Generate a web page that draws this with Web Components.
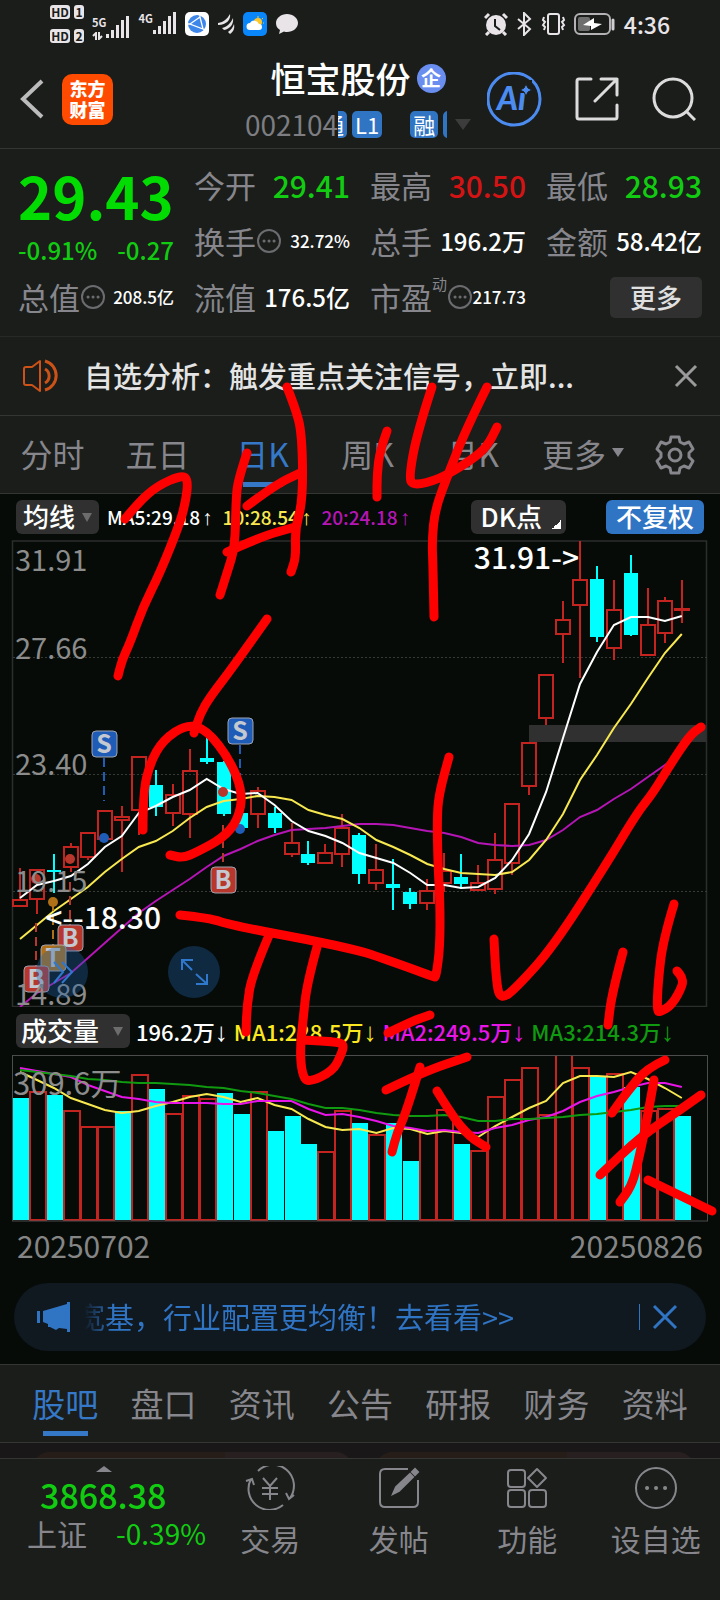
<!DOCTYPE html>
<html lang="zh-CN">
<head>
<meta charset="utf-8">
<meta name="viewport" content="width=device-width, initial-scale=1">
<title>恒宝股份 002104</title>
<style>
  body {
    margin: 0;
    background: #1a1d1a;
  }
</style>
</head>
<body>
<stock-app></stock-app>

<script>
/**
 * Registers a custom element that renders fixed markup in its shadow root.
 *
 * @param {string} name - The tag name.
 * @param {string} markup - Styles and markup for the shadow root.
 * @param {Function} [setup] - Called once with the new element.
 */
function defineElement (name, markup, setup) {
  const template = document.createElement('template')
  template.innerHTML = `
    <style>
      * { box-sizing: border-box; }
      :host { display: block; box-sizing: border-box; }
      button, select {
        margin: 0;
        padding: 0;
        border: 0;
        background: none;
        color: inherit;
        font: inherit;
        cursor: pointer;
      }
      svg { display: block; }
    </style>
    ${markup}`

  customElements.define(name, class extends HTMLElement {
    constructor () {
      super()
      this.attachShadow({ mode: 'open' })
        .appendChild(template.content.cloneNode(true))
      if (setup) setup(this)
    }
  })
}

/* ---------- status bar ---------- */

defineElement('status-bar', `
  <style>
    :host {
      display: flex;
      align-items: center;
      gap: 8px;
      height: 46px;
      padding: 2px 50px 0;
      color: #e8e4e8;
    }
    .spacer { flex: 1; }
    .sims {
      display: grid;
      grid-template-columns: 20px 10px;
      gap: 10px 4px;
    }
    .sims b {
      height: 14px;
      border-radius: 3px;
      background: #e8e4e8;
      color: #1a1d1a;
      font-size: 12px;
      line-height: 14px;
      text-align: center;
    }
    .net { display: flex; align-items: flex-end; }
    .net span {
      font-size: 11px;
      font-weight: 700;
      line-height: 12px;
      align-self: flex-start;
    }
    .net div { align-self: stretch; }
    time { font-size: 23px; font-weight: 500; line-height: 28px; }
  </style>
  <div class="sims"><b>HD</b><b>1</b><b>HD</b><b>2</b></div>
  <div class="net">
    <div>
      <span>5G</span>
      <svg width="11" height="8" viewBox="0 0 11 8" fill="none" stroke="currentColor" stroke-width="2">
        <path d="M4 8V1L1 4M7 0v7l3-3"/>
      </svg>
    </div>
    <svg width="24" height="24" fill="currentColor">
      <rect y="18" width="3" height="4"/><rect x="5" y="14" width="3" height="8"/>
      <rect x="10" y="9" width="3" height="13"/><rect x="15" y="4" width="3" height="18"/>
      <rect x="20" width="3" height="22"/>
    </svg>
  </div>
  <div class="net">
    <span>4G</span>
    <svg width="24" height="24" fill="currentColor">
      <rect y="18" width="3" height="4"/><rect x="5" y="14" width="3" height="8"/>
      <rect x="10" y="9" width="3" height="13"/><rect x="15" y="4" width="3" height="18"/>
      <rect x="20" width="3" height="22"/>
    </svg>
  </div>
  <svg width="24" height="24" viewBox="0 0 24 24">
    <rect width="24" height="24" rx="5" fill="#fff"/>
    <circle cx="12" cy="12" r="9" fill="#3f86ea"/>
    <path d="M5 12 15 5l3 12zM3 12h3M15 3v3M18 17l2 1" fill="none" stroke="#fff" stroke-width="1.3"/>
  </svg>
  <svg width="18" height="20" viewBox="0 0 18 20" fill="currentColor">
    <path d="M1 9C7 8 10 5 13 0c1 5-3 11-12 11zM5 14c5-1 9-5 11-10 1 6-3 11-9 12zM11 18c3-2 5-5 6-8 1 5-1 8-4 10z"/>
  </svg>
  <svg width="24" height="24" viewBox="0 0 24 24">
    <rect width="24" height="24" rx="5" fill="#0a86fb"/>
    <circle cx="15" cy="10" r="4" fill="#ffc72c"/>
    <path d="M15 4v2M20 6l-1 1M21 11h-1" stroke="#ffc72c"/>
    <path d="M7 18a3.500 3.500 0 0 1 0-7 5 5 0 0 1 9 1 3 3 0 0 1 0 6z" fill="#fff"/>
  </svg>
  <svg width="24" height="22" viewBox="0 0 24 22" fill="currentColor">
    <path d="M12 1c6 0 11 4 11 9s-5 9-11 9c-1 0-2 0-3-.5L4 21l1-4c-3-2-4-4-4-7 0-5 5-9 11-9z"/>
  </svg>
  <div class="spacer"></div>
  <svg width="24" height="24" viewBox="0 0 24 24">
    <circle cx="12" cy="13" r="10" fill="currentColor"/>
    <path d="M1 6 5 2M19 2l4 4M5 20l-3 3M19 20l3 3" stroke="currentColor" stroke-width="3"/>
    <path d="M11 7v7l5 4" fill="none" stroke="#1a1d1a" stroke-width="2"/>
  </svg>
  <svg width="16" height="24" viewBox="0 0 16 24" fill="none" stroke="currentColor" stroke-width="2">
    <path d="m2 7 12 10-6 6V1l6 6L2 17"/>
  </svg>
  <svg width="26" height="24" viewBox="0 0 26 24" fill="none" stroke="currentColor" stroke-width="2">
    <rect x="8" y="2" width="11" height="20" rx="2"/>
    <path d="m4 5-1 3 2 2-2 3 2 2-1 3M23 5l1 3-2 2 2 3-2 2 1 3"/>
  </svg>
  <svg width="42" height="22" viewBox="0 0 42 22">
    <rect x="1" y="1" width="35" height="20" rx="5" fill="none" stroke="#b4b2b4" stroke-width="2"/>
    <rect x="4" y="4" width="12" height="14" rx="2" fill="#6e6e6e"/>
    <path d="M39 7v9" stroke="#d0ced0" stroke-width="3" stroke-linecap="round"/>
    <path d="m9 12 11-7v5l8 1-11 6v-4z" fill="#fff"/>
  </svg>
  <time>4:36</time>
`)

/* ---------- page header ---------- */

defineElement('stock-header', `
  <style>
    :host {
      display: grid;
      grid-template-columns: 1fr auto 1fr;
      align-items: center;
      height: 103px;
      padding: 4px 24px 0 20px;
      border-bottom: 1px solid #333633;
    }
    .side { display: flex; align-items: center; gap: 18px; }
    .actions { justify-content: flex-end; gap: 33px; }
    .logo {
      width: 51px;
      height: 51px;
      padding: 4px 0;
      border-radius: 10px;
      background: #ff4b00;
      color: #fff;
      font-size: 18px;
      font-weight: 900;
      line-height: 21px;
      text-align: center;
    }
    .name {
      display: flex;
      align-items: center;
      justify-content: center;
      gap: 6px;
      height: 50px;
    }
    h1 {
      margin: 0;
      color: #fff;
      font-size: 35px;
      font-weight: 500;
      line-height: 50px;
    }
    .badge {
      width: 29px;
      height: 29px;
      border-radius: 50%;
      background: #6a8df0;
      color: #fff;
      font-size: 20px;
      font-weight: 700;
      line-height: 28px;
      text-align: center;
    }
    .meta { display: flex; align-items: center; height: 42px; }
    .code { color: #7d7d82; font-size: 28px; line-height: 40px; }
    .tags {
      display: flex;
      gap: 5px;
      width: 44px;
      margin-right: 28px;
      overflow: hidden;
      justify-content: flex-end;
    }
    .tags.end { width: 37px; margin-right: 8px; justify-content: flex-start; }
    .tags span {
      flex: none;
      height: 27px;
      padding: 0 3px;
      border-radius: 5px;
      background: #3074c4;
      color: #fff;
      font-size: 22px;
      line-height: 26px;
    }
  </style>
  <div class="side">
    <button type="button" aria-label="返回">
      <svg width="24" height="40" viewBox="0 0 24 40" fill="none" stroke="#bcbcbc" stroke-width="4">
        <path d="M22 2 3 20l19 18"/>
      </svg>
    </button>
    <div class="logo">东方<br>财富</div>
  </div>
  <div>
    <div class="name"><h1>恒宝股份</h1><span class="badge">企</span></div>
    <div class="meta">
      <span class="code">002104</span>
      <div class="tags"><span>通</span><span>L1</span></div>
      <div class="tags end"><span>融</span><span>深</span></div>
      <svg width="16" height="12" viewBox="0 0 16 12" fill="#3c3c3c"><path d="M0 1h16l-8 11z"/></svg>
    </div>
  </div>
  <div class="side actions">
    <button type="button" aria-label="智能助手">
      <svg width="55" height="55" viewBox="0 0 55 55">
        <circle cx="27" cy="27" r="26" fill="none" stroke="#4c8cf0" stroke-width="3"/>
        <text x="10" y="38" fill="#4c8cf0" font-family="Lato" font-size="32" font-weight="900" font-style="italic">Ai</text>
        <rect x="33" y="8" width="12" height="12" fill="#1a1d1a"/>
        <path d="m39 12 2 4 4 2-4 2-2 4-2-4-4-2 4-2z" fill="#4c8cf0" stroke="#1a1d1a"/>
      </svg>
    </button>
    <button type="button" aria-label="分享">
      <svg width="44" height="44" viewBox="0 0 44 44" fill="none" stroke="#dcdcdc" stroke-width="3" stroke-linecap="round" stroke-linejoin="round">
        <path d="M16 2H4a2 2 0 0 0-2 2v36a2 2 0 0 0 2 2h36a2 2 0 0 0 2-2V28M26 2h16v16M42 2 20 24"/>
      </svg>
    </button>
    <button type="button" aria-label="搜索">
      <svg width="44" height="44" viewBox="0 0 44 44" fill="none" stroke="#dcdcdc" stroke-width="3">
        <circle cx="21" cy="21" r="19"/><path d="m34 34 9 9"/>
      </svg>
    </button>
  </div>
`)

/* ---------- quote figures ---------- */

defineElement('quote-cell', `
  <style>
    :host {
      display: flex;
      align-items: center;
      justify-content: space-between;
      color: #fff;
      font-weight: 500;
      white-space: nowrap;
    }
    .label {
      display: flex;
      align-items: center;
      color: #86868c;
      font-size: 31px;
      font-weight: 400;
      line-height: 44px;
    }
    .value { font-size: 24px; line-height: 44px; }
    :host([size="small"]) .value { font-size: 17px; }
    :host([size="large"]) .value { font-size: 30px; }
    :host([trend="down"]) .value { color: #12cc12; }
    :host([trend="up"]) .value { color: #d41414; }
    svg { display: none; margin-left: 1px; }
    :host([info]) svg { display: block; }
    ::slotted(sup) {
      align-self: flex-start;
      color: #86868c;
      font-size: 15px;
      line-height: 18px;
    }
  </style>
  <span class="label">
    <slot name="label"></slot><slot name="mark"></slot>
    <svg width="24" height="24" viewBox="0 0 24 24" fill="none" stroke="#6c6c70" stroke-width="2">
      <circle cx="12" cy="12" r="11"/>
      <path d="M7 12h.1M12 12h.1M17 12h.1" stroke-width="3" stroke-linecap="round"/>
    </svg>
  </span>
  <span class="value"><slot></slot></span>
`)

defineElement('quote-panel', `
  <style>
    :host {
      display: grid;
      grid-template-columns: repeat(4, minmax(0, 1fr));
      grid-auto-rows: 56px;
      column-gap: 20px;
      padding: 8px 18px 11px;
      border-bottom: 1px solid #262926;
    }
    .main { grid-row: span 2; color: #02dc02; }
    .price {
      font-size: 58px;
      font-weight: 700;
      line-height: 76px;
    }
    .change {
      display: flex;
      justify-content: space-between;
      color: #12cc12;
      font-size: 24px;
      font-weight: 500;
      line-height: 34px;
    }
    button {
      align-self: center;
      justify-self: end;
      width: 92px;
      height: 41px;
      border-radius: 5px;
      background: #303030;
      color: #e0e0e0;
      font-size: 26px;
      font-weight: 500;
      line-height: 38px;
    }
  </style>
  <div class="main">
    <div class="price">29.43</div>
    <div class="change"><span>-0.91%</span><span>-0.27</span></div>
  </div>
  <quote-cell size="large" trend="down"><span slot="label">今开</span>29.41</quote-cell>
  <quote-cell size="large" trend="up"><span slot="label">最高</span>30.50</quote-cell>
  <quote-cell size="large" trend="down"><span slot="label">最低</span>28.93</quote-cell>
  <quote-cell size="small" info><span slot="label">换手</span>32.72%</quote-cell>
  <quote-cell><span slot="label">总手</span>196.2万</quote-cell>
  <quote-cell><span slot="label">金额</span>58.42亿</quote-cell>
  <quote-cell size="small" info><span slot="label">总值</span>208.5亿</quote-cell>
  <quote-cell><span slot="label">流值</span>176.5亿</quote-cell>
  <quote-cell size="small" info><span slot="label">市盈</span><sup slot="mark">动</sup>217.73</quote-cell>
  <button type="button">更多</button>
`)

defineElement('notice-bar', `
  <style>
    :host {
      display: flex;
      align-items: center;
      height: 79px;
      padding: 0 22px;
      border-bottom: 1px solid #333633;
      color: #e4e4e4;
      font-size: 29px;
      font-weight: 500;
      line-height: 40px;
    }
    p {
      flex: 1;
      margin: 0 22px 2px;
      overflow: hidden;
      white-space: nowrap;
    }
  </style>
  <svg width="40" height="34" viewBox="0 0 40 34" fill="none" stroke="#cc5218" stroke-width="2" stroke-linejoin="round">
    <path d="M18 2v30l-8-6H4q-2 0-2-2V10q0-2 2-2h6z"/>
    <path d="M23 10a8 8 0 0 1 0 14M23 2a15 15 0 0 1 0 29" stroke-width="3"/>
  </svg>
  <p><slot></slot></p>
  <button type="button" aria-label="关闭">
    <svg width="24" height="24" viewBox="0 0 24 24" fill="none" stroke="#9a9a9a" stroke-width="3">
      <path d="m2 2 20 20M22 2 2 22"/>
    </svg>
  </button>
`)

/* ---------- tab rows ---------- */

defineElement('period-tabs', `
  <style>
    :host {
      display: grid;
      grid-template-columns: repeat(6, minmax(0, 1fr)) 90px;
      height: 78px;
      border-bottom: 1px solid #333633;
      color: #86868c;
      font-size: 32px;
      line-height: 74px;
    }
    button {
      display: block;
      position: relative;
      height: 77px;
      padding-bottom: 3px;
      white-space: nowrap;
    }
    .on { color: #3578c8; }
    .on::after {
      content: '';
      position: absolute;
      bottom: 6px;
      left: calc(50% - 20px);
      width: 40px;
      height: 5px;
      background: #3578c8;
    }
    .more {
      display: flex;
      align-items: center;
      justify-content: flex-end;
      gap: 6px;
      padding-right: 6px;
    }
    .set { display: grid; place-items: center; padding: 0; }
  </style>
  <button type="button">分时</button>
  <button type="button">五日</button>
  <button type="button" class="on" aria-pressed="true">日K</button>
  <button type="button">周K</button>
  <button type="button">月K</button>
  <button type="button" class="more">更多
    <svg width="12" height="10" viewBox="0 0 12 10" fill="#86868c"><path d="M0 0h12L6 9z"/></svg>
  </button>
  <button type="button" class="set" aria-label="设置">
    <svg width="40" height="40" viewBox="0 0 40 40" fill="none" stroke="#86868c" stroke-width="3" stroke-linejoin="round">
      <path d="M16 2h8l1 5 4 2 5-2 4 7-4 4v4l4 4-4 7-5-2-4 2-1 5h-8l-1-5-4-2-5 2-4-7 4-4v-4l-4-4 4-7 5 2 4-2z"/>
      <circle cx="20" cy="20" r="6"/>
    </svg>
  </button>
`)

defineElement('info-tabs', `
  <style>
    :host {
      display: grid;
      grid-template-columns: repeat(7, minmax(0, 1fr));
      height: 79px;
      padding: 0 16px;
      border: solid #333633;
      border-width: 1px 0;
    }
    ::slotted(a) {
      color: #86868c;
      font-size: 33px;
      line-height: 76px;
      text-align: center;
      text-decoration: none;
      white-space: nowrap;
    }
    ::slotted(a[aria-current]) {
      color: #3578c8;
      background: linear-gradient(#3578c8, #3578c8) center 66px / 45px 5px no-repeat;
    }
  </style>
  <slot></slot>
`)

/* ---------- charts ---------- */

const FIRST_X = 20
const STEP = 16.97

// direction, high, body top, body bottom, low
const CANDLES = [
  ['u', 868, 900, 906, 907], ['u', 869, 870, 899, 914], ['d', 854, 870, 872, 893],
  ['u', 843, 847, 867, 872], ['u', 833, 833, 857, 860], ['u', 811, 811, 839, 839],
  ['u', 806, 817, 820, 872], ['u', 757, 757, 810, 835], ['d', 770, 785, 807, 816],
  ['u', 784, 795, 813, 826], ['u', 749, 771, 814, 838], ['d', 738, 758, 762, 764],
  ['d', 761, 762, 814, 816], ['d', 813, 813, 828, 830], ['u', 787, 791, 814, 828],
  ['d', 807, 813, 828, 833], ['u', 823, 843, 854, 857], ['d', 841, 854, 863, 865],
  ['u', 844, 853, 863, 864], ['u', 814, 828, 854, 867], ['d', 833, 835, 874, 884],
  ['u', 844, 870, 883, 890], ['d', 859, 884, 888, 910], ['d', 888, 892, 904, 909],
  ['u', 879, 891, 903, 910], ['u', 853, 871, 883, 892], ['d', 854, 877, 884, 889],
  ['u', 865, 883, 890, 890], ['u', 833, 860, 889, 894], ['u', 803, 804, 863, 875],
  ['u', 743, 743, 786, 795], ['u', 674, 675, 718, 725], ['u', 601, 620, 634, 663],
  ['u', 541, 580, 605, 678], ['d', 566, 579, 637, 642], ['u', 580, 610, 648, 660],
  ['d', 555, 573, 635, 636], ['u', 588, 625, 655, 655], ['u', 597, 601, 633, 643],
  ['u', 580, 609, 610, 623]
]

const PRICE_LINES = [
  ['#b515b5', [1007, 993, 983, 973, 958, 943, 928, 913, 901, 890, 879, 867, 856, 849, 841, 835, 830, 829, 828, 826,
    824, 824, 825, 828, 831, 833, 837, 843, 845, 846, 845, 840, 830, 817, 810, 799, 789, 777, 765, 753]],
  ['#f8e850', [939, 925, 911, 899, 887, 872, 859, 847, 841, 831, 818, 807, 801, 799, 796, 797, 800, 810, 815, 819,
    828, 840, 847, 855, 864, 869, 873, 874, 875, 872, 860, 840, 814, 780, 755, 728, 704, 678, 653, 634]],
  ['#ffffff', [898, 885, 881, 876, 864, 847, 836, 813, 806, 797, 790, 779, 789, 794, 793, 805, 821, 831, 836, 843,
    853, 858, 863, 873, 885, 885, 888, 887, 878, 860, 834, 792, 738, 684, 652, 625, 617, 617, 621, 616]]
]

const VOLUMES = [
  ['d', 1098], ['u', 1091], ['d', 1095], ['u', 1110], ['u', 1126], ['u', 1126], ['d', 1111], ['u', 1074],
  ['d', 1089], ['u', 1113], ['u', 1095], ['u', 1098], ['d', 1093], ['d', 1114], ['u', 1091], ['d', 1131],
  ['d', 1116], ['d', 1144], ['u', 1151], ['u', 1110], ['d', 1123], ['u', 1134], ['d', 1123], ['d', 1161],
  ['u', 1130], ['u', 1109], ['d', 1144], ['u', 1150], ['u', 1096], ['u', 1079], ['u', 1067], ['u', 1114],
  ['u', 1050], ['u', 1067], ['d', 1077], ['u', 1073], ['d', 1087], ['u', 1110], ['u', 1108], ['d', 1116]
]

const VOLUME_LINES = [
  ['#f8e850', [1072, 1080, 1088, 1098, 1104, 1110, 1113, 1111, 1106, 1102, 1097, 1094, 1097, 1102, 1098, 1105, 1109,
    1119, 1127, 1130, 1129, 1133, 1128, 1129, 1134, 1131, 1133, 1137, 1126, 1117, 1108, 1101, 1083, 1076, 1076, 1077,
    1072, 1079, 1088, 1098]],
  ['#e815e8', [1068, 1071, 1074, 1077, 1085, 1091, 1097, 1099, 1102, 1103, 1103, 1103, 1104, 1104, 1101, 1101, 1101,
    1109, 1115, 1114, 1117, 1121, 1126, 1128, 1131, 1130, 1132, 1133, 1128, 1125, 1120, 1117, 1111, 1102, 1096, 1092,
    1087, 1083, 1083, 1087]],
  ['#109a10', [1070, 1072, 1074, 1076, 1079, 1080, 1082, 1083, 1083, 1084, 1085, 1087, 1088, 1091, 1093, 1096, 1099,
    1104, 1108, 1108, 1110, 1113, 1115, 1116, 1116, 1115, 1117, 1121, 1121, 1119, 1119, 1118, 1117, 1115, 1114, 1112,
    1110, 1107, 1106, 1106]]
]

// letter, colour, x, box centre y, dash start, dash end, dot y
const MARKERS = [
  ['S', '#1f5cb8', 104, 744, 758, 801, 838],
  ['S', '#1f5cb8', 240, 731, 745, 776, 829],
  ['B', '#b8372c', 223, 880, 825, 867, 792],
  ['B', '#b8372c', 70, 938, 882, 925, 859],
  ['T', '#b07018', 53, 958, 902, 945, 902],
  ['B', '#b8372c', 36, 979, 923, 966, 879]
]

/**
 * Draws one polyline per series.
 *
 * @param {Array} lines - Pairs of colour and y values.
 * @returns {string} SVG markup.
 */
function drawLines (lines) {
  return lines.map(([color, ys]) => {
    const points = ys.map((y, i) => `${(FIRST_X + STEP * i).toFixed(1)},${y}`).join(' ')
    return `<polyline points="${points}" fill="none" stroke="${color}" stroke-width="2"/>`
  }).join('')
}

function drawCandles () {
  return CANDLES.map(([dir, high, top, bottom, low], i) => {
    const x = Math.round(FIRST_X + STEP * i)
    if (dir === 'd') {
      return `<path d="M${x} ${high}V${low}" stroke="#00ffff" stroke-width="2"/>
        <rect x="${x - 7}" y="${top}" width="14" height="${bottom - top}" fill="#00ffff"/>`
    }
    return `<g fill="none" stroke="#c42420" stroke-width="2">
      <path d="M${x} ${high}V${top}M${x} ${bottom}V${low}"/>
      <rect x="${x - 7}" y="${top}" width="14" height="${bottom - top}"/></g>`
  }).join('')
}

function drawVolumes () {
  return VOLUMES.map(([dir, top], i) => {
    const x = Math.round(13 + STEP * i)
    return dir === 'd'
      ? `<rect x="${x}" y="${top}" width="16" height="${1220 - top}" fill="#00ffff"/>`
      : `<rect x="${x}" y="${top + 1}" width="16" height="${1219 - top}" fill="none" stroke="#c42420" stroke-width="2"/>`
  }).join('')
}

function drawMarkers () {
  return MARKERS.map(([letter, color, x, y, from, to, dot]) => `
    <path d="M${x} ${from}V${to}" stroke="${color}" stroke-width="2" stroke-dasharray="9 5"/>
    <circle cx="${x}" cy="${dot}" r="5" fill="${color}"/>
    <rect x="${x - 12}" y="${y - 13}" width="25" height="26" rx="4" fill="${color}" stroke="#9ea4b0"/>
    <text x="${x}" y="${y + 9}" fill="#c4c8d0" font-size="25" font-weight="700" text-anchor="middle">${letter}</text>`
  ).join('')
}

const TOOLBAR_STYLE = `
  .bar {
    display: flex;
    align-items: center;
    gap: 8px;
    padding: 0 16px;
    white-space: nowrap;
  }
  .spacer { flex: 1; }
  .drop {
    position: relative;
    flex: none;
    height: 34px;
    border-radius: 6px;
    background: #303030;
    color: #fff;
  }
  .drop::after {
    content: '';
    position: absolute;
    right: 7px;
    top: 13px;
    border: solid transparent;
    border-width: 9px 5px 0;
    border-top-color: #6c6c6c;
  }
  select {
    display: block;
    appearance: none;
    height: 34px;
    padding: 0 23px 2px 7px;
    font-size: 26px;
    font-weight: 500;
    line-height: 32px;
  }
  i {
    font-family: 'Liberation Sans', sans-serif;
    font-style: normal;
    font-weight: 700;
  }
`

defineElement('price-chart', `
  <style>
    ${TOOLBAR_STYLE}
    .bar { height: 46px; font-size: 19px; font-weight: 500; line-height: 34px; }
    .five { color: #fff; }
    .ten { color: #f8e850; }
    .twenty { color: #b515b5; }
    i { padding: 0 2px; font-size: 21px; }
    .dk, .adjust {
      height: 34px;
      border-radius: 6px;
      background: #303030;
      color: #fff;
      font-size: 26px;
      line-height: 32px;
    }
    .dk { position: relative; margin-right: 32px; padding: 0 24px 2px 10px; }
    .dk::after {
      content: '';
      position: absolute;
      right: 5px;
      bottom: 5px;
      width: 9px;
      height: 9px;
      background: linear-gradient(135deg, transparent 50%, #fff 50%);
    }
    .adjust { padding: 0 10px 2px; background: #3074c4; }
    .plot { position: relative; }
    .plot > svg { width: 100%; }
    .round {
      position: absolute;
      top: 87%;
      width: 52px;
      height: 52px;
      border-radius: 50%;
      background: rgba(32, 96, 168, 0.35);
    }
    .next { left: 5%; }
    .full { left: 23.400%; }
  </style>
  <div class="bar">
    <label class="drop"><select aria-label="指标"><option>均线</option></select></label>
    <span class="five">MA5:29.18<i>↑</i></span>
    <span class="ten">10:28.54<i>↑</i></span>
    <span class="twenty">20:24.18<i>↑</i></span>
    <div class="spacer"></div>
    <button type="button" class="dk">DK点</button>
    <button type="button" class="adjust">不复权</button>
  </div>
  <div class="plot">
    <svg viewBox="0 540 720 467">
      <rect x="529" y="725" width="178" height="17" fill="#303030"/>
      <g fill="none" stroke="#2c2e2c">
        <rect x="12.500" y="541" width="694" height="465.500" stroke-width="1.500"/>
        <path d="M13 657.500H707M13 774.500H707M13 891.500H707" stroke="#383a38" stroke-dasharray="2 2"/>
      </g>
      ${drawCandles()}
      ${drawLines(PRICE_LINES)}
      ${drawMarkers()}
      <g fill="#8c8c8c" font-size="29">
        <text x="15" y="571">31.91</text>
        <text x="15" y="659">27.66</text>
        <text x="15" y="775">23.40</text>
        <text x="15" y="892">19.15</text>
        <text x="15" y="1005">14.89</text>
      </g>
      <g fill="#fff" font-size="30" font-weight="500" text-anchor="end">
        <text x="579" y="569">31.91-&gt;</text>
        <text x="161" y="929">&lt;--18.30</text>
      </g>
    </svg>
    <button type="button" class="round next" aria-label="展开">
      <svg width="52" height="52" viewBox="0 0 52 52" fill="none" stroke="#2f78cc" stroke-width="2">
        <path d="m18 16 9 10-9 11M26 16l10 10-10 11"/>
      </svg>
    </button>
    <button type="button" class="round full" aria-label="全屏">
      <svg width="52" height="52" viewBox="0 0 52 52" fill="none" stroke="#2f78cc" stroke-width="2">
        <path d="M14 24V14h11M14 14l10 10M28 38h11V28M39 38 28 28"/>
      </svg>
    </button>
  </div>
`)

defineElement('volume-chart', `
  <style>
    ${TOOLBAR_STYLE}
    .bar { gap: 6px; height: 48px; font-size: 22px; font-weight: 500; line-height: 34px; }
    select { padding: 0 30px 2px 5px; }
    i { font-size: 26px; font-weight: 400; line-height: 22px; }
    .now { color: #fff; }
    .one { color: #fbe820; }
    .two { color: #e815e8; }
    .three { color: #109a10; }
    .plot { width: 100%; }
    .dates {
      display: flex;
      justify-content: space-between;
      height: 48px;
      padding: 0 17px;
      color: #858585;
      font-size: 30px;
      line-height: 46px;
    }
  </style>
  <div class="bar">
    <label class="drop"><select aria-label="副图"><option>成交量</option></select></label>
    <span class="now">196.2万<i>↓</i></span>
    <span class="one">MA1:228.5万<i>↓</i></span>
    <span class="two">MA2:249.5万<i>↓</i></span>
    <span class="three">MA3:214.3万<i>↓</i></span>
  </div>
  <svg class="plot" viewBox="0 1055 720 167">
    ${drawVolumes()}
    ${drawLines(VOLUME_LINES)}
    <rect x="12.500" y="1055.500" width="695" height="165.500" fill="none" stroke="#4c4c4c"/>
    <text x="13" y="1095" fill="#8c8c8c" font-size="31">309.6万</text>
  </svg>
  <div class="dates"><span>20250702</span><span>20250826</span></div>
`)

/* ---------- banner and bottom bar ---------- */

defineElement('promo-banner', `
  <style>
    :host {
      display: flex;
      align-items: center;
      height: 68px;
      margin: 13px 14px;
      padding: 0 28px 0 22px;
      border-radius: 34px;
      background: #101820;
      color: #3074c4;
      font-size: 29px;
      line-height: 66px;
    }
    a {
      flex: 1;
      height: 68px;
      margin-left: 4px;
      overflow: hidden;
      color: inherit;
      text-decoration: none;
      white-space: nowrap;
      mask-image: linear-gradient(90deg, transparent 8px, #000 36px);
    }
    button { padding-left: 12px; border-left: 1px solid #3074c4; }
  </style>
  <svg width="36" height="30" viewBox="0 0 36 30" fill="#3074c4">
    <path d="M1 9h3v12H1zM7 9 31 2V0h3v30h-3v-3l-8-1-3 2-6-3H12v-3l-5-2z"/>
  </svg>
  <a href="#"><slot></slot></a>
  <button type="button" aria-label="关闭">
    <svg width="26" height="26" viewBox="0 0 26 26" fill="none" stroke="#3074c4" stroke-width="3">
      <path d="m2 2 22 22M24 2 2 24"/>
    </svg>
  </button>
`)

defineElement('feed-peek', `
  <style>
    :host {
      display: grid;
      grid-template-columns: 1fr 1fr;
      gap: 22px;
      height: 15px;
      padding: 9px 25px 0 32px;
      overflow: hidden;
      background: #191718;
    }
    div {
      height: 40px;
      border-radius: 18px;
      background: linear-gradient(90deg, #261d18 60%, #281f20 60%);
    }
  </style>
  <div></div><div></div>
`)

defineElement('nav-item', `
  <style>
    button {
      display: flex;
      flex-direction: column;
      align-items: center;
      gap: 6px;
      width: 100%;
      padding-top: 7px;
      color: #86868c;
      font-size: 30px;
      line-height: 44px;
    }
  </style>
  <button type="button"><slot name="icon"></slot><slot></slot></button>
`)

defineElement('bottom-nav', `
  <style>
    :host {
      display: grid;
      grid-template-columns: 206px repeat(4, minmax(0, 1fr));
      align-items: start;
      border-top: 1px solid #333633;
      background: #1a1d1a;
    }
    .index {
      padding: 7px 0 0 27px;
      color: #12cc12;
      text-align: left;
    }
    .index svg { margin-left: 69px; }
    .index b {
      display: block;
      padding-left: 13px;
      font-size: 34px;
      font-weight: 500;
      line-height: 46px;
    }
    .row {
      display: flex;
      justify-content: space-between;
      font-size: 28px;
      line-height: 30px;
    }
    .row span { color: #86868c; font-size: 30px; }
  </style>
  <button type="button" class="index">
    <svg width="16" height="6" viewBox="0 0 16 6" fill="#86868c"><path d="m8 0 8 6H0z"/></svg>
    <b>3868.38</b>
    <div class="row"><span>上证</span>-0.39%</div>
  </button>
  <slot></slot>
`)

/* ---------- freehand notes ---------- */

const STROKES = [
  [[125, 519], [138, 503], [157, 486], [182, 475], [188, 480], [186, 500], [180, 523], [160, 573], [143, 607], [130, 643], [122, 660], [118, 676]],
  [[247, 453], [238, 480], [236, 500], [235, 547], [227, 573], [220, 595]],
  [[287, 387], [295, 407], [302, 433], [303, 500], [295, 529], [296, 557], [291, 572]],
  [[247, 506], [275, 485], [300, 473]],
  [[227, 552], [260, 537], [295, 527]],
  [[387, 431], [380, 450], [377, 475], [377, 497]],
  [[432, 387], [417, 433], [409, 477], [413, 486], [440, 479], [470, 461], [487, 447], [497, 427]],
  [[487, 387], [467, 427], [447, 477], [435, 510], [432, 540], [433, 567], [434, 617]],
  [[267, 619], [233, 667], [210, 697], [200, 714], [194, 733]],
  [[143, 830], [143, 793], [150, 763], [163, 740], [187, 724], [207, 730], [230, 760], [243, 793], [238, 820], [223, 838], [197, 852], [183, 858], [170, 855]],
  [[180, 915], [210, 918], [230, 925], [320, 942], [360, 951], [373, 955], [410, 968], [434, 977], [436, 977], [440, 947], [440, 900], [438, 867], [437, 813], [440, 790], [449, 757]],
  [[270, 933], [252, 975], [247, 1005], [246, 1032]],
  [[317, 947], [307, 983], [303, 1020], [300, 1050], [302, 1074], [308, 1083], [333, 1071], [341, 1055], [344, 1045], [338, 1042], [303, 1040]],
  [[388, 1033], [410, 1022], [430, 1015]],
  [[386, 1090], [423, 1072], [467, 1057]],
  [[420, 1067], [407, 1110], [397, 1133], [392, 1152]],
  [[437, 1091], [453, 1117], [470, 1137], [486, 1147]],
  [[494, 939], [496, 983], [501, 1000], [517, 987], [553, 947], [607, 863], [637, 813], [653, 793], [670, 765], [690, 735], [701, 727]],
  [[623, 952], [612, 993], [608, 1025]],
  [[674, 904], [663, 940], [658, 983], [657, 1011], [660, 1012], [672, 1005], [683, 985], [682, 977], [677, 971]],
  [[665, 1060], [647, 1068], [627, 1092], [612, 1113]],
  [[701, 1095], [680, 1110], [640, 1137], [600, 1175]],
  [[654, 1080], [647, 1120], [637, 1167], [631, 1187], [620, 1202]],
  [[648, 1180], [712, 1211]]
]

/**
 * Builds a smooth path that runs through the midpoints of a stroke.
 *
 * @param {Array} points - The x, y pairs of the stroke.
 * @returns {string} Path data.
 */
function smoothPath (points) {
  let d = `M${points[0]}`
  for (let i = 1; i < points.length - 1; i++) {
    const [x, y] = points[i]
    const [nextX, nextY] = points[i + 1]
    d += `Q${x} ${y} ${(x + nextX) / 2} ${(y + nextY) / 2}`
  }
  return `${d}L${points[points.length - 1]}`
}

defineElement('ink-layer', `
  <style>
    :host {
      position: absolute;
      inset: 0;
      overflow: hidden;
      pointer-events: none;
    }
    svg { width: 100%; }
  </style>
  <svg viewBox="0 0 720 1600" fill="none" stroke="#ff0000" stroke-width="9" stroke-linecap="round" stroke-linejoin="round"></svg>
`, (element) => {
  element.shadowRoot.querySelector('svg').innerHTML =
    STROKES.map((points) => `<path d="${smoothPath(points)}"/>`).join('')
})

/* ---------- page ---------- */

defineElement('stock-app', `
  <style>
    :host {
      position: relative;
      display: flex;
      flex-direction: column;
      min-height: 100vh;
      background: #1a1d1a;
      font-family: 'Noto Sans CJK SC', sans-serif;
    }
    .charts { background: #060b08; overflow: hidden; }
    bottom-nav { flex: 1; }
  </style>
  <status-bar></status-bar>
  <stock-header></stock-header>
  <quote-panel></quote-panel>
  <notice-bar>自选分析：触发重点关注信号，立即...</notice-bar>
  <period-tabs></period-tabs>
  <div class="charts">
    <price-chart></price-chart>
    <volume-chart></volume-chart>
    <promo-banner>宽基，行业配置更均衡！去看看&gt;&gt;</promo-banner>
  </div>
  <info-tabs>
    <a href="#" aria-current="page">股吧</a>
    <a href="#">盘口</a>
    <a href="#">资讯</a>
    <a href="#">公告</a>
    <a href="#">研报</a>
    <a href="#">财务</a>
    <a href="#">资料</a>
  </info-tabs>
  <feed-peek></feed-peek>
  <bottom-nav>
    <nav-item>
      <svg slot="icon" width="50" height="44" viewBox="0 0 50 44" fill="none" stroke="#86868c" stroke-width="2">
        <path d="M13 5a21 21 0 0 1 32 27M38 39A21 21 0 0 1 6 13M1 15l6-2 2 6M41 27l3 6 5-4"/>
        <path d="m18 12 7 8 7-8M25 20v14M17 22h16M17 28h16"/>
      </svg>
      交易
    </nav-item>
    <nav-item>
      <svg slot="icon" width="44" height="44" viewBox="0 0 44 44" fill="none" stroke="#86868c" stroke-width="2">
        <path d="M31 3H8q-5 0-5 5v28q0 5 5 5h28q5 0 5-5V14"/>
        <path d="m16 28 3-7L33 8l3 3-14 14zM35 6l3-3 3 3-3 3z" fill="#86868c"/>
      </svg>
      发帖
    </nav-item>
    <nav-item>
      <svg slot="icon" width="44" height="44" viewBox="0 0 44 44" fill="none" stroke="#86868c" stroke-width="2" stroke-linejoin="round">
        <rect x="3" y="4" width="17" height="17" rx="3"/>
        <rect x="3" y="24" width="17" height="17" rx="3"/>
        <rect x="24" y="24" width="17" height="17" rx="3"/>
        <path d="m32 3 9 9-9 9-9-9z"/>
      </svg>
      功能
    </nav-item>
    <nav-item>
      <svg slot="icon" width="44" height="44" viewBox="0 0 44 44" fill="none" stroke="#86868c" stroke-width="2">
        <circle cx="22" cy="22" r="20"/>
        <path d="M13 22h.1M22 22h.1M31 22h.1" stroke-width="4" stroke-linecap="round"/>
      </svg>
      设自选
    </nav-item>
  </bottom-nav>
  <ink-layer></ink-layer>
`)
</script>
</body>
</html>
